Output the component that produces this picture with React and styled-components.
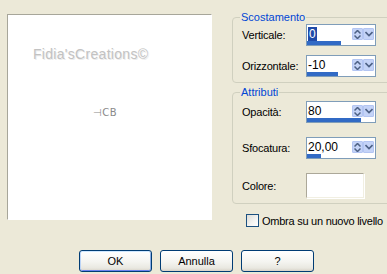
import React from 'react';
import styled, { createGlobalStyle } from 'styled-components';

const GlobalStyle = createGlobalStyle`
  html, body {
    margin: 0;
    padding: 0;
    background: #ece9d8;
    overflow: hidden;
  }

  body {
    font-family: 'Liberation Sans', Arial, sans-serif;
    font-size: 11px;
    color: #000;
  }
`;

const Dialog = styled.div`
  width: 387px;
  height: 274px;
  display: flex;
  flex-direction: column;
  overflow: hidden;
`;

const Main = styled.div`
  display: flex;
  align-items: flex-start;
  padding-top: 10px;
`;

const Preview = styled.div`
  box-sizing: border-box;
  margin: 4px 0 0 7px;
  width: 205px;
  height: 206px;
  flex-shrink: 0;
  background: #fff;
  border-top: 1px solid #a7a69a;
  border-left: 1px solid #a7a69a;
  border-right: 1px solid #fff;
  border-bottom: 1px solid #fff;
  display: flex;
  flex-direction: column;
  padding: 31px 0 0 25px;
`;

const Watermark = styled.div`
  font-size: 14px;
  letter-spacing: 0.3px;
  line-height: 17px;
  color: #c2c2c2;
  text-shadow: 1px 1px 0 #ececec;
`;

const Mark = styled.div`
  margin: 44px 0 0 60px;
  font-family: 'DejaVu Sans', sans-serif;
  font-size: 10px;
  line-height: 12px;
  color: #8a8a8a;
  letter-spacing: 0.5px;
`;

const Side = styled.div`
  margin-left: 20px;
  width: 200px;
  flex-shrink: 0;
  display: flex;
  flex-direction: column;
`;

const Group = styled.fieldset`
  box-sizing: border-box;
  width: 200px;
  margin: ${p => p.$top || 0}px 0 0 0;
  padding: ${p => p.$padTop || 0}px 0 5px 9px;
  border: 1px solid #d0d0bf;
  border-radius: 4px;
  min-width: 0;
  display: grid;
  grid-template-columns: 64px 70px;
  row-gap: ${p => p.$gap}px;
  align-items: center;
`;

const Legend = styled.legend`
  margin-left: -2px;
  padding: 0 1px;
  font-size: 11px;
  line-height: 14px;
  color: #0046d5;
`;

const Label = styled.label`
  font-size: 11px;
  letter-spacing: -0.2px;
  line-height: 14px;
`;

const Spin = styled.div`
  box-sizing: border-box;
  width: 70px;
  height: 22px;
  border: 1px solid #7f9db9;
  background: #fff;
  display: flex;
  flex-direction: column;
`;

const SpinTop = styled.div`
  height: 16px;
  display: flex;
  align-items: center;
  padding-left: 1px;
`;

const Value = styled.div`
  flex: 1;
  font-size: 12px;
  line-height: 14px;
  padding-top: 2px;
`;

const Selected = styled.span`
  background: #1f4aa8;
  color: #fff;
  padding: 0 1px;
`;

const SpinBtn = styled.div`
  box-sizing: border-box;
  width: 11px;
  height: 12px;
  margin-top: 2px;
  background: #c4d3f7;
  border: 1px solid #b3c5f2;
  border-radius: 1px;
  display: flex;
  align-items: center;
  justify-content: center;
  &:last-child {
    margin-right: 1px;
  }
`;

const Track = styled.div`
  height: 4px;
  background: #fff;
`;

const Bar = styled.div`
  height: 4px;
  background: #316ac5;
`;

const ColorBox = styled.div`
  box-sizing: border-box;
  width: 58px;
  height: 25px;
  background: #fff;
  border-top: 1px solid #aca899;
  border-left: 1px solid #aca899;
  border-right: 1px solid #f1efe2;
  border-bottom: 1px solid #f1efe2;
  box-shadow: 1px 1px 0 #fff;
`;

const CheckRow = styled.label`
  margin: 10px 0 0 14px;
  display: flex;
  align-items: center;
  gap: 3px;
  font-size: 11px;
  letter-spacing: -0.25px;
`;

const CheckBox = styled.span`
  box-sizing: border-box;
  width: 13px;
  height: 13px;
  border: 1px solid #1c5180;
  background: linear-gradient(135deg, #dcdcd7 0%, #f5f5f3 60%, #fff 100%);
`;

const Footer = styled.div`
  margin-top: auto;
  padding: 0 0 2px 79px;
  display: flex;
  gap: 8px;
`;

const Button = styled.button`
  box-sizing: border-box;
  width: 73px;
  height: 22px;
  padding: 0;
  border: 1px solid #003c74;
  border-radius: 3px;
  background: linear-gradient(180deg, #fff 0%, #f4f4f0 55%, #e9e8e1 85%, #d8d3c8 100%);
  font-family: 'Liberation Sans', Arial, sans-serif;
  font-size: 11px;
  color: #000;
  box-shadow: ${p =>
    p.$default ? 'inset 0 1px 0 #cee7ff, inset 1px 0 0 #bcd4f6, inset -1px 0 0 #89ade4, inset 0 -1px 0 #6982ee' : 'none'};
`;

const UpDown = () => (
  <svg width="7" height="9" viewBox="0 0 7 9">
    <path d="M0.5 3.5 L3.5 0.5 L6.5 3.5 M0.5 5.5 L3.5 8.5 L6.5 5.5" fill="none" stroke="#4d6185" strokeWidth="1.5" />
  </svg>
);

const Down = () => (
  <svg width="8" height="6" viewBox="0 0 8 6">
    <path d="M0.5 1 L4 4.5 L7.5 1" fill="none" stroke="#4d6185" strokeWidth="1.6" />
  </svg>
);

const SpinBox = ({ value, percent, selected }) => (
  <Spin>
    <SpinTop>
      <Value>{selected ? <Selected>{value}</Selected> : value}</Value>
      <SpinBtn>
        <UpDown />
      </SpinBtn>
      <SpinBtn>
        <Down />
      </SpinBtn>
    </SpinTop>
    <Track>
      <Bar style={{ width: `${percent}%` }} />
    </Track>
  </Spin>
);

const App = () => (
  <Dialog>
    <GlobalStyle />
    <Main>
      <Preview>
        <Watermark>Fidia&apos;sCreations©</Watermark>
        <Mark>⊣CB</Mark>
      </Preview>
      <Side>
        <Group $gap={9}>
          <Legend>Scostamento</Legend>
          <Label>Verticale:</Label>
          <SpinBox value="0" percent={50} selected />
          <Label>Orizzontale:</Label>
          <SpinBox value="-10" percent={45} />
        </Group>
        <Group $top={2} $padTop={2} $gap={14}>
          <Legend>Attributi</Legend>
          <Label>Opacità:</Label>
          <SpinBox value="80" percent={80} />
          <Label>Sfocatura:</Label>
          <SpinBox value="20,00" percent={20} />
          <Label>Colore:</Label>
          <ColorBox />
        </Group>
        <CheckRow>
          <CheckBox />
          Ombra su un nuovo livello
        </CheckRow>
      </Side>
    </Main>
    <Footer>
      <Button $default>OK</Button>
      <Button>Annulla</Button>
      <Button>?</Button>
    </Footer>
  </Dialog>
);

export default App;
